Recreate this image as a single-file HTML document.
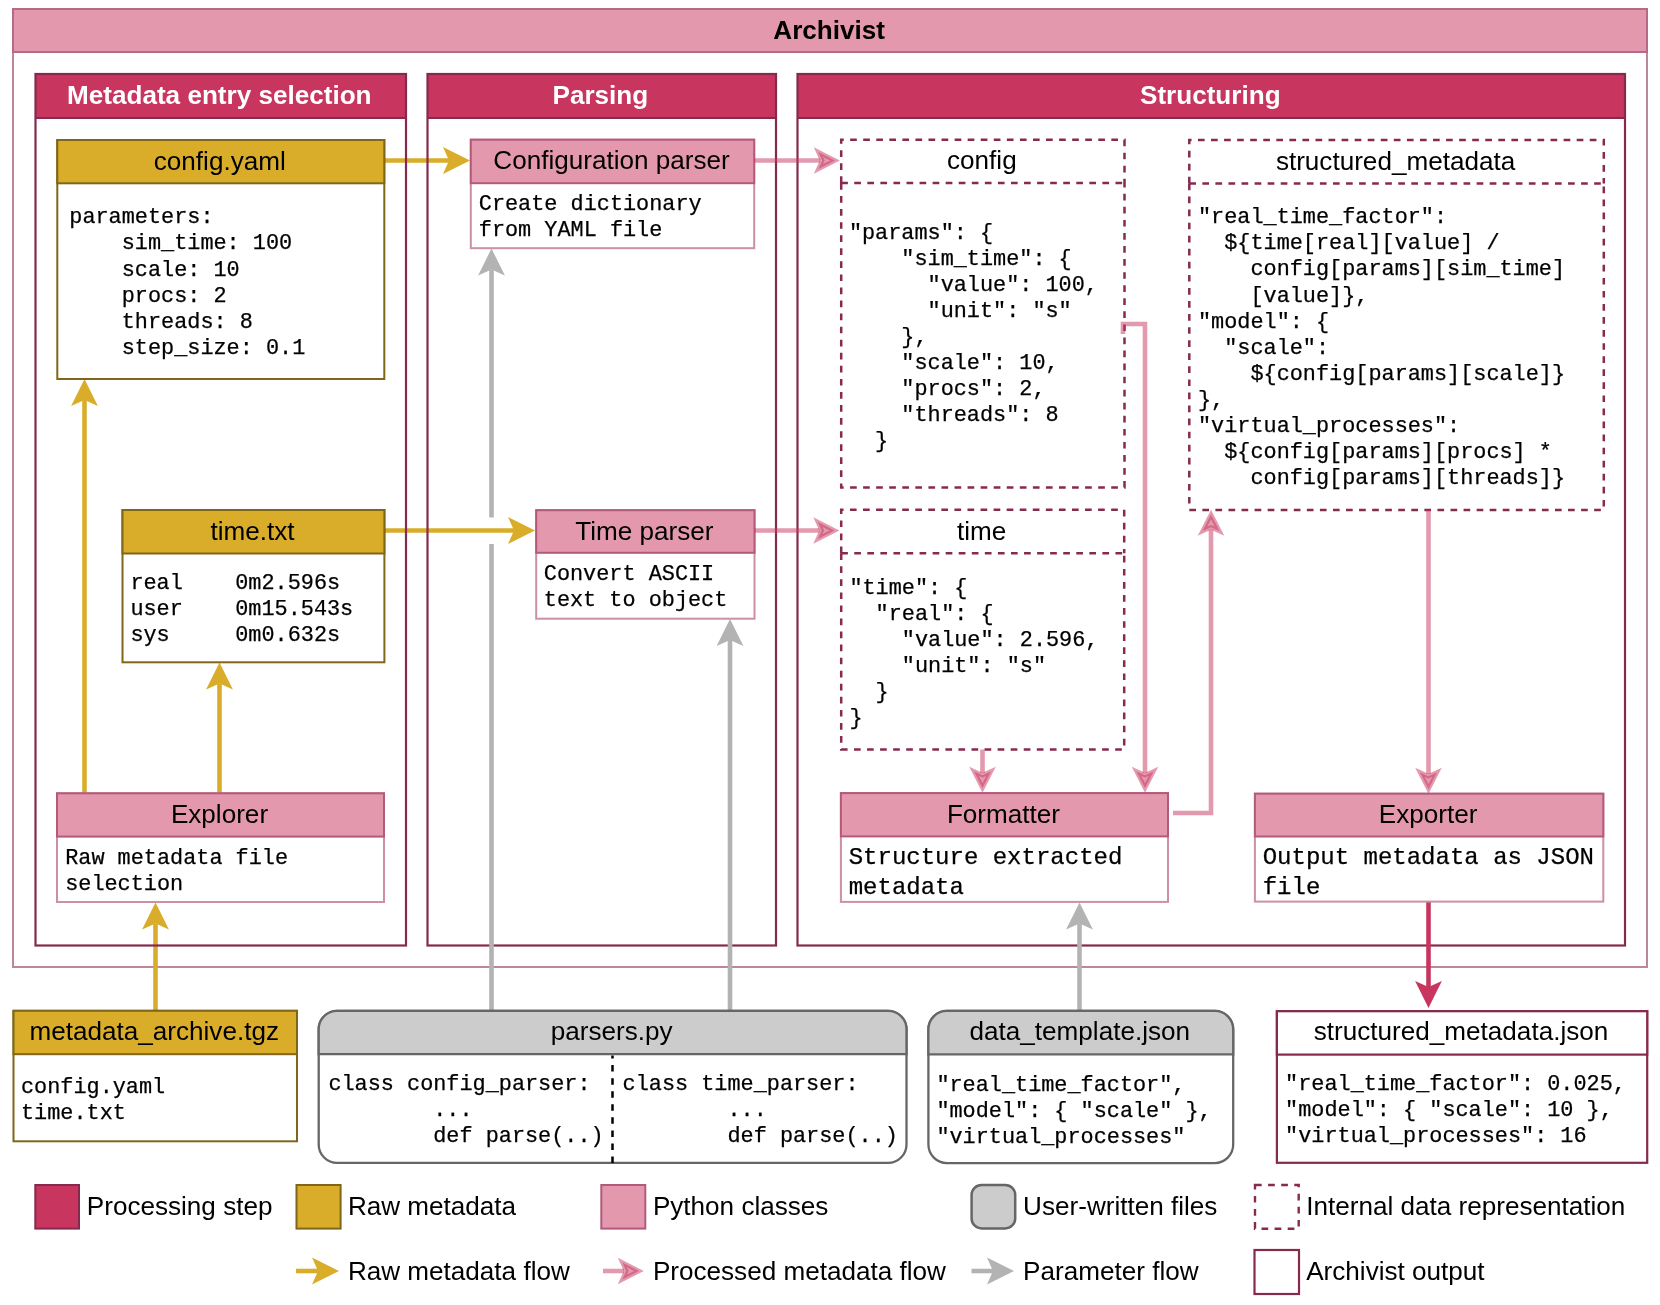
<!DOCTYPE html>
<html><head><meta charset="utf-8"><title>Archivist</title><style>html,body{margin:0;padding:0;background:#fff;}svg{display:block;will-change:transform;}</style></head><body>
<svg width="1660" height="1305" viewBox="0 0 1660 1305">
<rect x="0" y="0" width="1660" height="1305" fill="#fff"/>
<rect x="13.00" y="9.00" width="1634.00" height="958.00" fill="#fff" stroke="#bd879b" stroke-width="2" />
<rect x="13.00" y="9.00" width="1634.00" height="43.00" fill="#e398ae" stroke="#b56a86" stroke-width="2" />
<text x="829.20" y="39.20" font-family='"Liberation Sans", sans-serif' font-size="26.1" text-anchor="middle" font-weight="bold" fill="#000">Archivist</text>
<rect x="35.50" y="74.00" width="370.50" height="871.50" fill="#fff" stroke="none" stroke-width="2" />
<rect x="35.50" y="74.00" width="370.50" height="44.00" fill="#c8365f" stroke="none" stroke-width="2" />
<rect x="427.50" y="74.00" width="348.50" height="871.50" fill="#fff" stroke="none" stroke-width="2" />
<rect x="427.50" y="74.00" width="348.50" height="44.00" fill="#c8365f" stroke="none" stroke-width="2" />
<rect x="797.50" y="74.00" width="827.50" height="871.50" fill="#fff" stroke="none" stroke-width="2" />
<rect x="797.50" y="74.00" width="827.50" height="44.00" fill="#c8365f" stroke="none" stroke-width="2" />
<polyline points="384.00,160.50 449.00,160.50" fill="none" stroke="#d9ad2a" stroke-width="4.6"/>
<polygon points="470.00,160.50 443.00,173.90 449.00,160.50 443.00,147.10" fill="#d9ad2a"/>
<polyline points="384.00,530.50 514.00,530.50" fill="none" stroke="#d9ad2a" stroke-width="4.6"/>
<polygon points="535.00,530.50 508.00,543.90 514.00,530.50 508.00,517.10" fill="#d9ad2a"/>
<polyline points="84.50,793.00 84.50,400.00" fill="none" stroke="#d9ad2a" stroke-width="4.6"/>
<polygon points="84.50,379.00 97.90,406.00 84.50,400.00 71.10,406.00" fill="#d9ad2a"/>
<polyline points="219.50,793.00 219.50,683.50" fill="none" stroke="#d9ad2a" stroke-width="4.6"/>
<polygon points="219.50,662.50 232.90,689.50 219.50,683.50 206.10,689.50" fill="#d9ad2a"/>
<polyline points="155.50,1011.00 155.50,923.50" fill="none" stroke="#d9ad2a" stroke-width="4.6"/>
<polygon points="155.50,902.50 168.90,929.50 155.50,923.50 142.10,929.50" fill="#d9ad2a"/>
<rect x="35.50" y="74.00" width="370.50" height="871.50" fill="none" stroke="#852a4e" stroke-width="2.2" />
<line x1="35.50" y1="118.00" x2="406.00" y2="118.00" stroke="#852a4e" stroke-width="2.2" />
<text x="219.30" y="103.70" font-family='"Liberation Sans", sans-serif' font-size="26.1" text-anchor="middle" font-weight="bold" fill="#fff">Metadata entry selection</text>
<rect x="427.50" y="74.00" width="348.50" height="871.50" fill="none" stroke="#852a4e" stroke-width="2.2" />
<line x1="427.50" y1="118.00" x2="776.00" y2="118.00" stroke="#852a4e" stroke-width="2.2" />
<text x="600.40" y="103.70" font-family='"Liberation Sans", sans-serif' font-size="26.1" text-anchor="middle" font-weight="bold" fill="#fff">Parsing</text>
<rect x="797.50" y="74.00" width="827.50" height="871.50" fill="none" stroke="#852a4e" stroke-width="2.2" />
<line x1="797.50" y1="118.00" x2="1625.00" y2="118.00" stroke="#852a4e" stroke-width="2.2" />
<text x="1210.30" y="103.70" font-family='"Liberation Sans", sans-serif' font-size="26.1" text-anchor="middle" font-weight="bold" fill="#fff">Structuring</text>
<polyline points="491.5,1011 491.5,544" fill="none" stroke="#b3b3b3" stroke-width="4.6"/>
<polyline points="491.50,517.50 491.50,269.50" fill="none" stroke="#b3b3b3" stroke-width="4.6"/>
<polygon points="491.50,248.50 504.90,275.50 491.50,269.50 478.10,275.50" fill="#b3b3b3"/>
<polyline points="730.00,1011.00 730.00,640.00" fill="none" stroke="#b3b3b3" stroke-width="4.6"/>
<polygon points="730.00,619.00 743.40,646.00 730.00,640.00 716.60,646.00" fill="#b3b3b3"/>
<polyline points="1079.50,1011.00 1079.50,923.50" fill="none" stroke="#b3b3b3" stroke-width="4.6"/>
<polygon points="1079.50,902.50 1092.90,929.50 1079.50,923.50 1066.10,929.50" fill="#b3b3b3"/>
<polyline points="1428.50,902.00 1428.50,987.00" fill="none" stroke="#c8365f" stroke-width="4.6"/>
<polygon points="1428.50,1008.00 1415.10,981.00 1428.50,987.00 1441.90,981.00" fill="#c8365f"/>
<rect x="57.30" y="140.00" width="327.00" height="239.00" fill="#fff" stroke="#7f6619" stroke-width="2" />
<rect x="57.30" y="140.00" width="327.00" height="43.30" fill="#d9ad2a" stroke="#7f6619" stroke-width="2" />
<text x="219.80" y="169.60" font-family='"Liberation Sans", sans-serif' font-size="26.1" text-anchor="middle" font-weight="normal" fill="#000">config.yaml</text>
<text x="69.30" y="223.30" font-family='"Liberation Mono", monospace' font-size="21.85" fill="#000" stroke="#000" stroke-width="0.25" xml:space="preserve">parameters:</text>
<text x="69.30" y="249.41" font-family='"Liberation Mono", monospace' font-size="21.85" fill="#000" stroke="#000" stroke-width="0.25" xml:space="preserve">    sim_time: 100</text>
<text x="69.30" y="275.52" font-family='"Liberation Mono", monospace' font-size="21.85" fill="#000" stroke="#000" stroke-width="0.25" xml:space="preserve">    scale: 10</text>
<text x="69.30" y="301.63" font-family='"Liberation Mono", monospace' font-size="21.85" fill="#000" stroke="#000" stroke-width="0.25" xml:space="preserve">    procs: 2</text>
<text x="69.30" y="327.74" font-family='"Liberation Mono", monospace' font-size="21.85" fill="#000" stroke="#000" stroke-width="0.25" xml:space="preserve">    threads: 8</text>
<text x="69.30" y="353.85" font-family='"Liberation Mono", monospace' font-size="21.85" fill="#000" stroke="#000" stroke-width="0.25" xml:space="preserve">    step_size: 0.1</text>
<rect x="122.50" y="510.00" width="261.90" height="152.30" fill="#fff" stroke="#7f6619" stroke-width="2" />
<rect x="122.50" y="510.00" width="261.90" height="43.50" fill="#d9ad2a" stroke="#7f6619" stroke-width="2" />
<text x="252.45" y="539.90" font-family='"Liberation Sans", sans-serif' font-size="26.1" text-anchor="middle" font-weight="normal" fill="#000">time.txt</text>
<text x="130.40" y="589.10" font-family='"Liberation Mono", monospace' font-size="21.85" fill="#000" stroke="#000" stroke-width="0.25" xml:space="preserve">real    0m2.596s</text>
<text x="130.40" y="615.21" font-family='"Liberation Mono", monospace' font-size="21.85" fill="#000" stroke="#000" stroke-width="0.25" xml:space="preserve">user    0m15.543s</text>
<text x="130.40" y="641.32" font-family='"Liberation Mono", monospace' font-size="21.85" fill="#000" stroke="#000" stroke-width="0.25" xml:space="preserve">sys     0m0.632s</text>
<rect x="57.00" y="793.30" width="327.00" height="108.70" fill="#fff" stroke="#cc8fa3" stroke-width="2" />
<rect x="57.00" y="793.30" width="327.00" height="43.30" fill="#e398ae" stroke="#b35a7b" stroke-width="2" />
<text x="219.50" y="822.70" font-family='"Liberation Sans", sans-serif' font-size="26.1" text-anchor="middle" font-weight="normal" fill="#000">Explorer</text>
<text x="65.20" y="863.70" font-family='"Liberation Mono", monospace' font-size="21.85" fill="#000" stroke="#000" stroke-width="0.25" xml:space="preserve">Raw metadata file</text>
<text x="65.20" y="889.81" font-family='"Liberation Mono", monospace' font-size="21.85" fill="#000" stroke="#000" stroke-width="0.25" xml:space="preserve">selection</text>
<rect x="470.80" y="139.70" width="283.40" height="108.50" fill="#fff" stroke="#cc8fa3" stroke-width="2" />
<rect x="470.80" y="139.70" width="283.40" height="43.50" fill="#e398ae" stroke="#b35a7b" stroke-width="2" />
<text x="611.50" y="168.90" font-family='"Liberation Sans", sans-serif' font-size="26.1" text-anchor="middle" font-weight="normal" fill="#000">Configuration parser</text>
<text x="478.80" y="210.10" font-family='"Liberation Mono", monospace' font-size="21.85" fill="#000" stroke="#000" stroke-width="0.25" xml:space="preserve">Create dictionary</text>
<text x="478.80" y="236.21" font-family='"Liberation Mono", monospace' font-size="21.85" fill="#000" stroke="#000" stroke-width="0.25" xml:space="preserve">from YAML file</text>
<rect x="536.20" y="510.20" width="218.30" height="108.50" fill="#fff" stroke="#cc8fa3" stroke-width="2" />
<rect x="536.20" y="510.20" width="218.30" height="42.60" fill="#e398ae" stroke="#b35a7b" stroke-width="2" />
<text x="644.35" y="539.70" font-family='"Liberation Sans", sans-serif' font-size="26.1" text-anchor="middle" font-weight="normal" fill="#000">Time parser</text>
<text x="543.80" y="580.30" font-family='"Liberation Mono", monospace' font-size="21.85" fill="#000" stroke="#000" stroke-width="0.25" xml:space="preserve">Convert ASCII</text>
<text x="543.80" y="606.41" font-family='"Liberation Mono", monospace' font-size="21.85" fill="#000" stroke="#000" stroke-width="0.25" xml:space="preserve">text to object</text>
<rect x="841.2" y="139.7" width="283.30" height="347.90" fill="#fff"/>
<path d="M841.2,183 L841.2,139.7 L1124.5,139.7 L1124.5,183" fill="none" stroke="#862a50" stroke-width="2.5" stroke-dasharray="6.68 6.38"/>
<path d="M841.2,183 L841.2,487.6 L1124.5,487.6 L1124.5,183" fill="none" stroke="#862a50" stroke-width="2.5" stroke-dasharray="6.68 6.38"/>
<path d="M841.2,183 L1124.5,183" fill="none" stroke="#862a50" stroke-width="2.5" stroke-dasharray="6.68 6.38"/>
<text x="981.85" y="168.90" font-family='"Liberation Sans", sans-serif' font-size="26.1" text-anchor="middle" font-weight="normal" fill="#000">config</text>
<text x="848.90" y="238.50" font-family='"Liberation Mono", monospace' font-size="21.85" fill="#000" stroke="#000" stroke-width="0.25" xml:space="preserve">&quot;params&quot;: {</text>
<text x="848.90" y="264.61" font-family='"Liberation Mono", monospace' font-size="21.85" fill="#000" stroke="#000" stroke-width="0.25" xml:space="preserve">    &quot;sim_time&quot;: {</text>
<text x="848.90" y="290.72" font-family='"Liberation Mono", monospace' font-size="21.85" fill="#000" stroke="#000" stroke-width="0.25" xml:space="preserve">      &quot;value&quot;: 100,</text>
<text x="848.90" y="316.83" font-family='"Liberation Mono", monospace' font-size="21.85" fill="#000" stroke="#000" stroke-width="0.25" xml:space="preserve">      &quot;unit&quot;: &quot;s&quot;</text>
<text x="848.90" y="342.94" font-family='"Liberation Mono", monospace' font-size="21.85" fill="#000" stroke="#000" stroke-width="0.25" xml:space="preserve">    },</text>
<text x="848.90" y="369.05" font-family='"Liberation Mono", monospace' font-size="21.85" fill="#000" stroke="#000" stroke-width="0.25" xml:space="preserve">    &quot;scale&quot;: 10,</text>
<text x="848.90" y="395.16" font-family='"Liberation Mono", monospace' font-size="21.85" fill="#000" stroke="#000" stroke-width="0.25" xml:space="preserve">    &quot;procs&quot;: 2,</text>
<text x="848.90" y="421.27" font-family='"Liberation Mono", monospace' font-size="21.85" fill="#000" stroke="#000" stroke-width="0.25" xml:space="preserve">    &quot;threads&quot;: 8</text>
<text x="848.90" y="447.38" font-family='"Liberation Mono", monospace' font-size="21.85" fill="#000" stroke="#000" stroke-width="0.25" xml:space="preserve">  }</text>
<rect x="841.2" y="509.7" width="283.00" height="239.70" fill="#fff"/>
<path d="M841.2,553.2 L841.2,509.7 L1124.2,509.7 L1124.2,553.2" fill="none" stroke="#862a50" stroke-width="2.5" stroke-dasharray="6.68 6.38"/>
<path d="M841.2,553.2 L841.2,749.4 L1124.2,749.4 L1124.2,553.2" fill="none" stroke="#862a50" stroke-width="2.5" stroke-dasharray="6.68 6.38"/>
<path d="M841.2,553.2 L1124.2,553.2" fill="none" stroke="#862a50" stroke-width="2.5" stroke-dasharray="6.68 6.38"/>
<text x="981.70" y="540.10" font-family='"Liberation Sans", sans-serif' font-size="26.1" text-anchor="middle" font-weight="normal" fill="#000">time</text>
<text x="849.40" y="593.50" font-family='"Liberation Mono", monospace' font-size="21.85" fill="#000" stroke="#000" stroke-width="0.25" xml:space="preserve">&quot;time&quot;: {</text>
<text x="849.40" y="619.61" font-family='"Liberation Mono", monospace' font-size="21.85" fill="#000" stroke="#000" stroke-width="0.25" xml:space="preserve">  &quot;real&quot;: {</text>
<text x="849.40" y="645.72" font-family='"Liberation Mono", monospace' font-size="21.85" fill="#000" stroke="#000" stroke-width="0.25" xml:space="preserve">    &quot;value&quot;: 2.596,</text>
<text x="849.40" y="671.83" font-family='"Liberation Mono", monospace' font-size="21.85" fill="#000" stroke="#000" stroke-width="0.25" xml:space="preserve">    &quot;unit&quot;: &quot;s&quot;</text>
<text x="849.40" y="697.94" font-family='"Liberation Mono", monospace' font-size="21.85" fill="#000" stroke="#000" stroke-width="0.25" xml:space="preserve">  }</text>
<text x="849.40" y="724.05" font-family='"Liberation Mono", monospace' font-size="21.85" fill="#000" stroke="#000" stroke-width="0.25" xml:space="preserve">}</text>
<rect x="1189.3" y="139.9" width="414.50" height="370.10" fill="#fff"/>
<path d="M1189.3,183.5 L1189.3,139.9 L1603.8,139.9 L1603.8,183.5" fill="none" stroke="#862a50" stroke-width="2.5" stroke-dasharray="6.68 6.38"/>
<path d="M1189.3,183.5 L1189.3,510 L1603.8,510 L1603.8,183.5" fill="none" stroke="#862a50" stroke-width="2.5" stroke-dasharray="6.68 6.38"/>
<path d="M1189.3,183.5 L1603.8,183.5" fill="none" stroke="#862a50" stroke-width="2.5" stroke-dasharray="6.68 6.38"/>
<text x="1395.55" y="169.80" font-family='"Liberation Sans", sans-serif' font-size="26.1" text-anchor="middle" font-weight="normal" fill="#000">structured_metadata</text>
<text x="1198.00" y="223.20" font-family='"Liberation Mono", monospace' font-size="21.85" fill="#000" stroke="#000" stroke-width="0.25" xml:space="preserve">&quot;real_time_factor&quot;:</text>
<text x="1198.00" y="249.31" font-family='"Liberation Mono", monospace' font-size="21.85" fill="#000" stroke="#000" stroke-width="0.25" xml:space="preserve">  ${time[real][value] /</text>
<text x="1198.00" y="275.42" font-family='"Liberation Mono", monospace' font-size="21.85" fill="#000" stroke="#000" stroke-width="0.25" xml:space="preserve">    config[params][sim_time]</text>
<text x="1198.00" y="301.53" font-family='"Liberation Mono", monospace' font-size="21.85" fill="#000" stroke="#000" stroke-width="0.25" xml:space="preserve">    [value]},</text>
<text x="1198.00" y="327.64" font-family='"Liberation Mono", monospace' font-size="21.85" fill="#000" stroke="#000" stroke-width="0.25" xml:space="preserve">&quot;model&quot;: {</text>
<text x="1198.00" y="353.75" font-family='"Liberation Mono", monospace' font-size="21.85" fill="#000" stroke="#000" stroke-width="0.25" xml:space="preserve">  &quot;scale&quot;:</text>
<text x="1198.00" y="379.86" font-family='"Liberation Mono", monospace' font-size="21.85" fill="#000" stroke="#000" stroke-width="0.25" xml:space="preserve">    ${config[params][scale]}</text>
<text x="1198.00" y="405.97" font-family='"Liberation Mono", monospace' font-size="21.85" fill="#000" stroke="#000" stroke-width="0.25" xml:space="preserve">},</text>
<text x="1198.00" y="432.08" font-family='"Liberation Mono", monospace' font-size="21.85" fill="#000" stroke="#000" stroke-width="0.25" xml:space="preserve">&quot;virtual_processes&quot;:</text>
<text x="1198.00" y="458.19" font-family='"Liberation Mono", monospace' font-size="21.85" fill="#000" stroke="#000" stroke-width="0.25" xml:space="preserve">  ${config[params][procs] *</text>
<text x="1198.00" y="484.30" font-family='"Liberation Mono", monospace' font-size="21.85" fill="#000" stroke="#000" stroke-width="0.25" xml:space="preserve">    config[params][threads]}</text>
<rect x="840.90" y="793.10" width="327.10" height="108.80" fill="#fff" stroke="#cc8fa3" stroke-width="2" />
<rect x="840.90" y="793.10" width="327.10" height="43.30" fill="#e398ae" stroke="#b35a7b" stroke-width="2" />
<text x="1003.45" y="823.20" font-family='"Liberation Sans", sans-serif' font-size="26.1" text-anchor="middle" font-weight="normal" fill="#000">Formatter</text>
<text x="848.70" y="863.60" font-family='"Liberation Mono", monospace' font-size="24" fill="#000" stroke="#000" stroke-width="0.25" xml:space="preserve">Structure extracted</text>
<text x="848.70" y="894.10" font-family='"Liberation Mono", monospace' font-size="24" fill="#000" stroke="#000" stroke-width="0.25" xml:space="preserve">metadata</text>
<rect x="1254.90" y="793.70" width="348.40" height="107.90" fill="#fff" stroke="#cc8fa3" stroke-width="2" />
<rect x="1254.90" y="793.70" width="348.40" height="42.80" fill="#e398ae" stroke="#b35a7b" stroke-width="2" />
<text x="1428.10" y="823.10" font-family='"Liberation Sans", sans-serif' font-size="26.1" text-anchor="middle" font-weight="normal" fill="#000">Exporter</text>
<text x="1262.70" y="863.70" font-family='"Liberation Mono", monospace' font-size="24" fill="#000" stroke="#000" stroke-width="0.25" xml:space="preserve">Output metadata as JSON</text>
<text x="1262.70" y="894.10" font-family='"Liberation Mono", monospace' font-size="24" fill="#000" stroke="#000" stroke-width="0.25" xml:space="preserve">file</text>
<rect x="13.50" y="1010.80" width="283.50" height="130.50" fill="#fff" stroke="#7f6619" stroke-width="2" />
<rect x="13.50" y="1010.80" width="283.50" height="43.40" fill="#d9ad2a" stroke="#7f6619" stroke-width="2" />
<text x="154.25" y="1039.70" font-family='"Liberation Sans", sans-serif' font-size="26.1" text-anchor="middle" font-weight="normal" fill="#000">metadata_archive.tgz</text>
<text x="21.00" y="1092.60" font-family='"Liberation Mono", monospace' font-size="21.85" fill="#000" stroke="#000" stroke-width="0.25" xml:space="preserve">config.yaml</text>
<text x="21.00" y="1118.71" font-family='"Liberation Mono", monospace' font-size="21.85" fill="#000" stroke="#000" stroke-width="0.25" xml:space="preserve">time.txt</text>
<rect x="318.7" y="1010.8" width="587.80" height="152.10" rx="18.5" ry="18.5" fill="#fff" stroke="#666666" stroke-width="2.3"/>
<path d="M318.7,1054.2 L318.7,1029.3 A18.5,18.5 0 0 1 337.2,1010.8 L888.0,1010.8 A18.5,18.5 0 0 1 906.5,1029.3 L906.5,1054.2 Z" fill="#cccccc" stroke="#666666" stroke-width="2.3"/>
<text x="611.60" y="1039.70" font-family='"Liberation Sans", sans-serif' font-size="26.1" text-anchor="middle" font-weight="normal" fill="#000">parsers.py</text>
<line x1="612.50" y1="1163.00" x2="612.50" y2="1055.50" stroke="#000" stroke-width="2.5" stroke-dasharray="6.5 6.56" />
<text x="328.40" y="1090.00" font-family='"Liberation Mono", monospace' font-size="21.85" fill="#000" stroke="#000" stroke-width="0.25" xml:space="preserve">class config_parser:</text>
<text x="328.40" y="1116.11" font-family='"Liberation Mono", monospace' font-size="21.85" fill="#000" stroke="#000" stroke-width="0.25" xml:space="preserve">        ...</text>
<text x="328.40" y="1142.22" font-family='"Liberation Mono", monospace' font-size="21.85" fill="#000" stroke="#000" stroke-width="0.25" xml:space="preserve">        def parse(..)</text>
<text x="622.60" y="1090.00" font-family='"Liberation Mono", monospace' font-size="21.85" fill="#000" stroke="#000" stroke-width="0.25" xml:space="preserve">class time_parser:</text>
<text x="622.60" y="1116.11" font-family='"Liberation Mono", monospace' font-size="21.85" fill="#000" stroke="#000" stroke-width="0.25" xml:space="preserve">        ...</text>
<text x="622.60" y="1142.22" font-family='"Liberation Mono", monospace' font-size="21.85" fill="#000" stroke="#000" stroke-width="0.25" xml:space="preserve">        def parse(..)</text>
<rect x="928.4" y="1010.9" width="304.80" height="152.20" rx="18.5" ry="18.5" fill="#fff" stroke="#666666" stroke-width="2.3"/>
<path d="M928.4,1054.3 L928.4,1029.4 A18.5,18.5 0 0 1 946.9,1010.9 L1214.7,1010.9 A18.5,18.5 0 0 1 1233.2,1029.4 L1233.2,1054.3 Z" fill="#cccccc" stroke="#666666" stroke-width="2.3"/>
<text x="1079.80" y="1039.70" font-family='"Liberation Sans", sans-serif' font-size="26.1" text-anchor="middle" font-weight="normal" fill="#000">data_template.json</text>
<text x="936.40" y="1090.50" font-family='"Liberation Mono", monospace' font-size="21.85" fill="#000" stroke="#000" stroke-width="0.25" xml:space="preserve">&quot;real_time_factor&quot;,</text>
<text x="936.40" y="1116.61" font-family='"Liberation Mono", monospace' font-size="21.85" fill="#000" stroke="#000" stroke-width="0.25" xml:space="preserve">&quot;model&quot;: { &quot;scale&quot; },</text>
<text x="936.40" y="1142.72" font-family='"Liberation Mono", monospace' font-size="21.85" fill="#000" stroke="#000" stroke-width="0.25" xml:space="preserve">&quot;virtual_processes&quot;</text>
<rect x="1276.90" y="1011.20" width="370.30" height="151.60" fill="#fff" stroke="#852a4e" stroke-width="2.2" />
<rect x="1276.90" y="1011.20" width="370.30" height="43.40" fill="#fff" stroke="#852a4e" stroke-width="2.2" />
<text x="1461.05" y="1040.20" font-family='"Liberation Sans", sans-serif' font-size="26.1" text-anchor="middle" font-weight="normal" fill="#000">structured_metadata.json</text>
<text x="1285.10" y="1090.00" font-family='"Liberation Mono", monospace' font-size="21.85" fill="#000" stroke="#000" stroke-width="0.25" xml:space="preserve">&quot;real_time_factor&quot;: 0.025,</text>
<text x="1285.10" y="1116.11" font-family='"Liberation Mono", monospace' font-size="21.85" fill="#000" stroke="#000" stroke-width="0.25" xml:space="preserve">&quot;model&quot;: { &quot;scale&quot;: 10 },</text>
<text x="1285.10" y="1142.22" font-family='"Liberation Mono", monospace' font-size="21.85" fill="#000" stroke="#000" stroke-width="0.25" xml:space="preserve">&quot;virtual_processes&quot;: 16</text>
<polyline points="754.00,160.50 820.00,160.50" fill="none" stroke="#c8365f" stroke-width="4.6" stroke-opacity="0.5"/>
<polygon points="834.97,160.50 818.39,168.98 822.21,160.50 818.39,152.02" fill="#c8365f" fill-opacity="0.5" stroke="#c8365f" stroke-opacity="0.5" stroke-width="4.4" stroke-linejoin="miter" stroke-miterlimit="10"/>
<polyline points="754.50,530.50 819.50,530.50" fill="none" stroke="#c8365f" stroke-width="4.6" stroke-opacity="0.5"/>
<polygon points="834.47,530.50 817.89,538.98 821.71,530.50 817.89,522.02" fill="#c8365f" fill-opacity="0.5" stroke="#c8365f" stroke-opacity="0.5" stroke-width="4.4" stroke-linejoin="miter" stroke-miterlimit="10"/>
<polyline points="1123.00,334.00 1123.00,324.00 1145.00,324.00 1145.00,773.00" fill="none" stroke="#c8365f" stroke-width="4.6" stroke-opacity="0.5"/>
<polygon points="1145.00,787.97 1136.52,771.39 1145.00,775.21 1153.48,771.39" fill="#c8365f" fill-opacity="0.5" stroke="#c8365f" stroke-opacity="0.5" stroke-width="4.4" stroke-linejoin="miter" stroke-miterlimit="10"/>
<polyline points="982.50,749.50 982.50,773.00" fill="none" stroke="#c8365f" stroke-width="4.6" stroke-opacity="0.5"/>
<polygon points="982.50,787.97 974.02,771.39 982.50,775.21 990.98,771.39" fill="#c8365f" fill-opacity="0.5" stroke="#c8365f" stroke-opacity="0.5" stroke-width="4.4" stroke-linejoin="miter" stroke-miterlimit="10"/>
<polyline points="1173.00,813.00 1211.00,813.00 1211.00,529.50" fill="none" stroke="#c8365f" stroke-width="4.6" stroke-opacity="0.5"/>
<polygon points="1211.00,514.53 1219.48,531.11 1211.00,527.29 1202.52,531.11" fill="#c8365f" fill-opacity="0.5" stroke="#c8365f" stroke-opacity="0.5" stroke-width="4.4" stroke-linejoin="miter" stroke-miterlimit="10"/>
<polyline points="1428.50,510.00 1428.50,774.00" fill="none" stroke="#c8365f" stroke-width="4.6" stroke-opacity="0.5"/>
<polygon points="1428.50,788.97 1420.02,772.39 1428.50,776.21 1436.98,772.39" fill="#c8365f" fill-opacity="0.5" stroke="#c8365f" stroke-opacity="0.5" stroke-width="4.4" stroke-linejoin="miter" stroke-miterlimit="10"/>
<rect x="35.30" y="1185.00" width="43.70" height="43.60" fill="#c8365f" stroke="#852a4e" stroke-width="2" />
<text x="86.80" y="1214.70" font-family='"Liberation Sans", sans-serif' font-size="26.1" text-anchor="start" font-weight="normal" fill="#000">Processing step</text>
<rect x="296.50" y="1185.00" width="44.10" height="43.60" fill="#d9ad2a" stroke="#7f6619" stroke-width="2" />
<text x="347.90" y="1214.70" font-family='"Liberation Sans", sans-serif' font-size="26.1" text-anchor="start" font-weight="normal" fill="#000">Raw metadata</text>
<rect x="601.30" y="1185.00" width="44.00" height="43.60" fill="#e398ae" stroke="#b35a7b" stroke-width="2" />
<text x="652.90" y="1214.70" font-family='"Liberation Sans", sans-serif' font-size="26.1" text-anchor="start" font-weight="normal" fill="#000">Python classes</text>
<rect x="971.6" y="1185" width="43.6" height="43.4" rx="10" fill="#cccccc" stroke="#666666" stroke-width="2.5"/>
<text x="1023.10" y="1214.70" font-family='"Liberation Sans", sans-serif' font-size="26.1" text-anchor="start" font-weight="normal" fill="#000">User-written files</text>
<rect x="1255.00" y="1185.00" width="43.70" height="43.70" fill="none" stroke="#862a50" stroke-width="2.4" stroke-dasharray="6.7 6.4" />
<text x="1306.20" y="1214.70" font-family='"Liberation Sans", sans-serif' font-size="26.1" text-anchor="start" font-weight="normal" fill="#000">Internal data representation</text>
<polyline points="296.00,1271.00 318.00,1271.00" fill="none" stroke="#d9ad2a" stroke-width="4.6"/>
<polygon points="339.00,1271.00 312.00,1284.40 318.00,1271.00 312.00,1257.60" fill="#d9ad2a"/>
<text x="347.90" y="1280.20" font-family='"Liberation Sans", sans-serif' font-size="26.1" text-anchor="start" font-weight="normal" fill="#000">Raw metadata flow</text>
<polyline points="603.00,1271.00 624.00,1271.00" fill="none" stroke="#c8365f" stroke-width="4.6" stroke-opacity="0.5"/>
<polygon points="638.97,1271.00 622.39,1279.48 626.21,1271.00 622.39,1262.52" fill="#c8365f" fill-opacity="0.5" stroke="#c8365f" stroke-opacity="0.5" stroke-width="4.4" stroke-linejoin="miter" stroke-miterlimit="10"/>
<text x="652.90" y="1280.20" font-family='"Liberation Sans", sans-serif' font-size="26.1" text-anchor="start" font-weight="normal" fill="#000">Processed metadata flow</text>
<polyline points="971.50,1271.00 993.00,1271.00" fill="none" stroke="#b3b3b3" stroke-width="4.6"/>
<polygon points="1014.00,1271.00 987.00,1284.40 993.00,1271.00 987.00,1257.60" fill="#b3b3b3"/>
<text x="1023.10" y="1280.20" font-family='"Liberation Sans", sans-serif' font-size="26.1" text-anchor="start" font-weight="normal" fill="#000">Parameter flow</text>
<rect x="1254.50" y="1250.00" width="44.50" height="44.00" fill="none" stroke="#852a4e" stroke-width="2.2" />
<text x="1306.20" y="1280.20" font-family='"Liberation Sans", sans-serif' font-size="26.1" text-anchor="start" font-weight="normal" fill="#000">Archivist output</text>
</svg>
</body></html>
